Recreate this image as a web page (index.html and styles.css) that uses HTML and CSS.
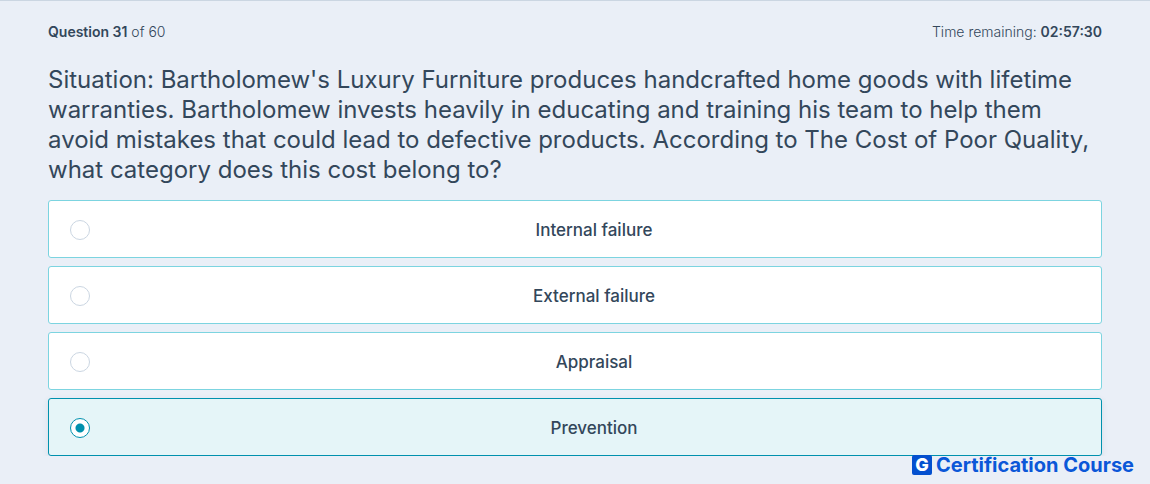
FILE: index.html
```
<!DOCTYPE html>
<html lang="en">
<head>
    <meta charset="UTF-8">
    <meta name="viewport" content="width=device-width, initial-scale=1.0">
    <title>Question 31 of 60</title>
    <link rel="stylesheet" href="styles.css">
</head>
<body>
    <form class="quiz">
        <header class="quiz-header">
            <div><strong>Question 31</strong> of 60</div>
            <div>Time remaining: <strong>02:57:30</strong></div>
        </header>

        <h1 class="question" id="question">Situation: Bartholomew's Luxury Furniture produces handcrafted home goods with lifetime warranties. Bartholomew invests heavily in educating and training his team to help them avoid mistakes that could lead to defective products. According to The Cost of Poor Quality, what category does this cost belong to?</h1>

        <div class="options" role="radiogroup" aria-labelledby="question">
            <label class="option">
                <input type="radio" name="answer" value="internal">
                <span class="option-text">Internal failure</span>
            </label>
            <label class="option">
                <input type="radio" name="answer" value="external">
                <span class="option-text">External failure</span>
            </label>
            <label class="option">
                <input type="radio" name="answer" value="appraisal">
                <span class="option-text">Appraisal</span>
            </label>
            <label class="option selected">
                <input type="radio" name="answer" value="prevention" checked>
                <span class="option-text">Prevention</span>
            </label>
        </div>
    </form>

    <footer class="brand">
        <span class="brand-mark">G</span>
        <span>Certification Course</span>
    </footer>
</body>
</html>
```
FILE: styles.css
```
* {
    box-sizing: border-box;
}
body {
    margin: 0;
    background-color: #eaeff7;
    border-top: 1px solid #cbd6e2;
    color: #33475b;
    font-family: Inter, "Open Sans", sans-serif;
    font-size: 14px;
    font-weight: 300;
}
.quiz {
    padding: 21px 48px 0;
}
.quiz-header {
    display: flex;
    justify-content: space-between;
    line-height: 20px;
}
.quiz-header strong {
    font-weight: 600;
}
.question {
    margin: 23px 0 15px;
    font-size: 24px;
    font-weight: 400;
    line-height: 30px;
}
.options {
    display: grid;
    gap: 8px;
}
.option {
    display: flex;
    align-items: center;
    gap: 18px;
    padding: 17px 21px 15px;
    background-color: #ffffff;
    border: 1px solid #7cd4e0;
    border-radius: 3px;
    cursor: pointer;
}
.option.selected {
    background-color: #e5f5f8;
    border-color: #0091ae;
    box-shadow: 0 2px 6px rgba(51, 71, 91, 0.1);
}
.option input {
    appearance: none;
    flex: none;
    width: 20px;
    height: 20px;
    margin: 0;
    background-color: #ffffff;
    border: 1px solid #cbd6e2;
    border-radius: 50%;
}
.option input:checked {
    border-color: #0091ae;
    background-image: radial-gradient(circle, #0091ae 4px, transparent 5px);
}
.option-text {
    flex: 1;
    font-size: 17px;
    font-weight: 500;
    line-height: 24px;
    text-align: center;
}
.brand {
    position: absolute;
    right: 16px;
    bottom: 9px;
    display: flex;
    align-items: center;
    gap: 4px;
    color: #0b57d8;
    font-size: 20px;
    font-weight: 700;
    line-height: 20px;
}
.brand-mark {
    width: 20px;
    height: 20px;
    border-radius: 2px;
    background-color: #0450cf;
    color: #ffffff;
    font-size: 18px;
    font-weight: 800;
    line-height: 20px;
    text-align: center;
}
```
